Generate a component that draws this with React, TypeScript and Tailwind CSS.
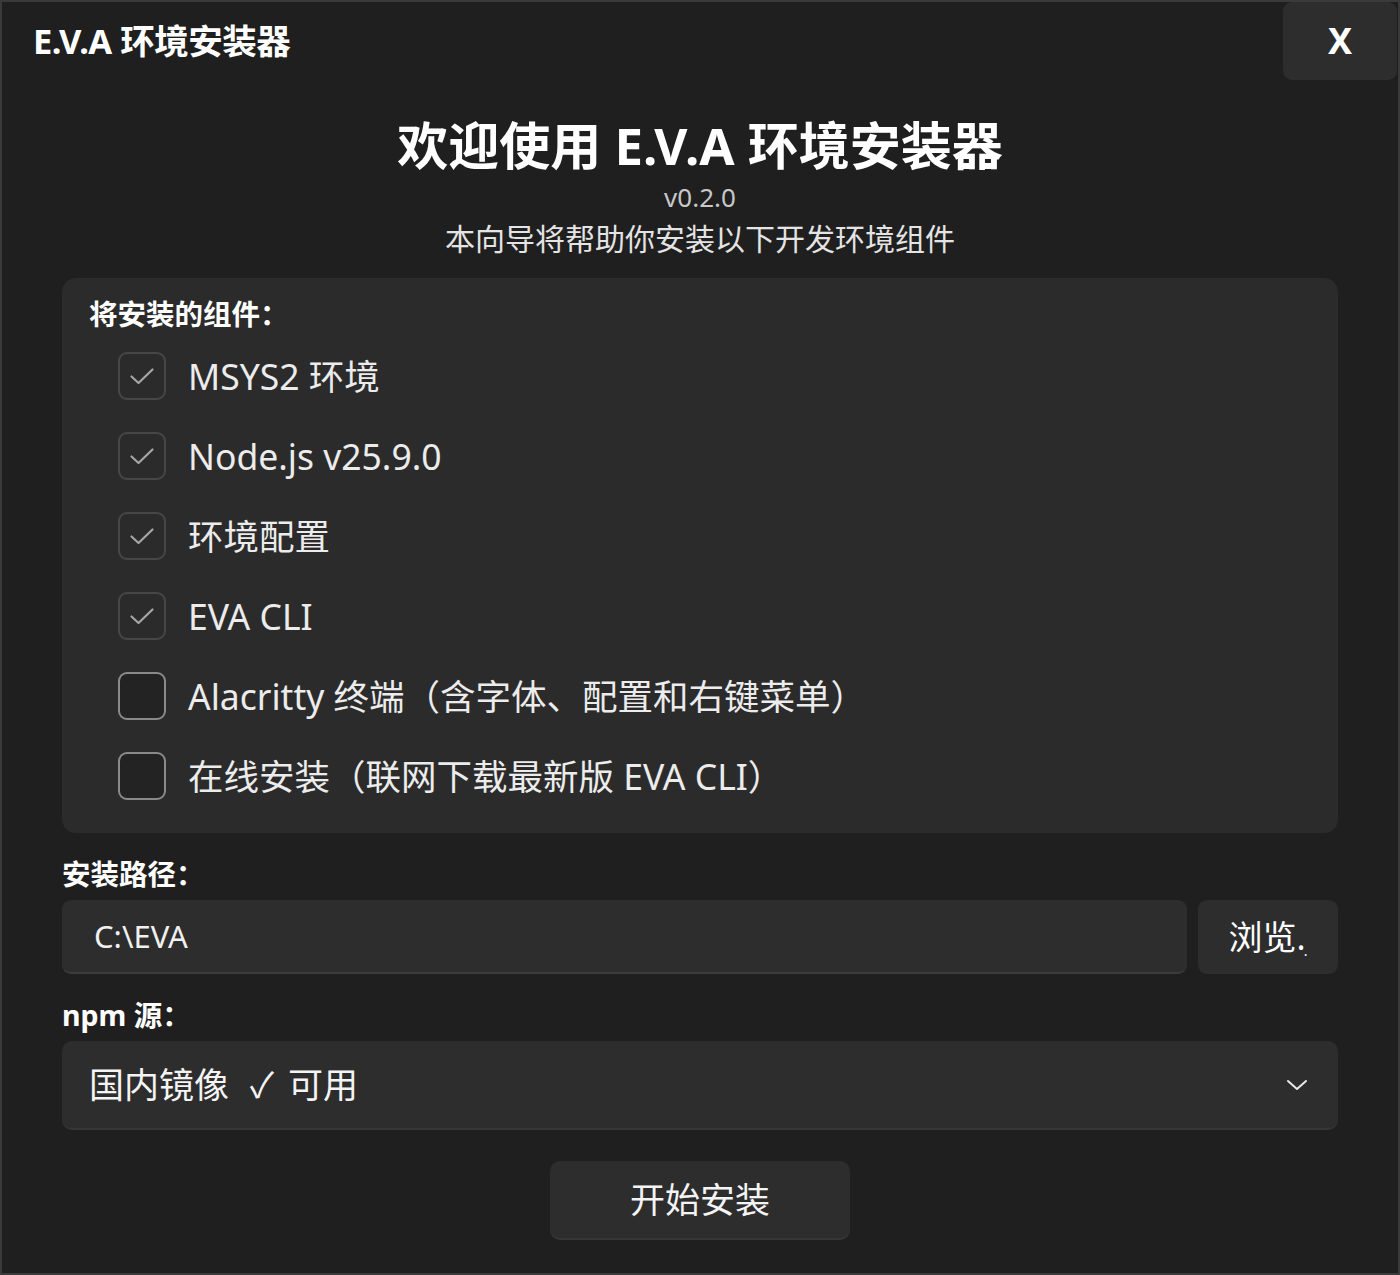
import { useState } from 'react'

const font = { fontFamily: '"Noto Sans", "Noto Sans CJK SC", sans-serif' }

interface Item {
  label: string
  checked: boolean
}

const items: Item[] = [
  { label: 'MSYS2 环境', checked: true },
  { label: 'Node.js v25.9.0', checked: true },
  { label: '环境配置', checked: true },
  { label: 'EVA CLI', checked: true },
  { label: 'Alacritty 终端（含字体、配置和右键菜单）', checked: false },
  { label: '在线安装（联网下载最新版 EVA CLI）', checked: false },
]

function CheckBox({ checked }: { checked: boolean }) {
  if (checked) {
    return (
      <div className="w-[48px] h-[48px] shrink-0 rounded-[9px] border-2 border-[#474747] bg-[#2b2b2b] flex items-center justify-center">
        <svg width="28" height="28" viewBox="0 0 28 28" fill="none">
          <polyline points="3.5,14.5 10.5,21 24.5,7.5" stroke="#a6a6a6" strokeWidth="2.2" strokeLinecap="round" strokeLinejoin="round" />
        </svg>
      </div>
    )
  }
  return <div className="w-[48px] h-[48px] shrink-0 rounded-[9px] border-2 border-[#8a8a8a] bg-[#232323]" />
}

export default function App() {
  const [path] = useState('C:\\EVA')

  return (
    <div style={font} className="w-[1400px] h-[1275px] bg-[#1f1f1f] border-2 border-[#3a3a3a] text-white overflow-hidden flex flex-col">
      <div className="h-[78px] flex items-center justify-between pl-[31px] pr-[1px]">
        <div className="text-[34.5px] leading-[40px] font-bold tracking-[-0.5px]">E.V.A 环境安装器</div>
        <button className="w-[114px] h-[78px] rounded-[9px] bg-[#2d2d2d] flex items-center justify-center text-[36px] font-bold">
          X
        </button>
      </div>

      <div className="px-[60px] flex flex-col">
        <h1 className="mt-[35px] text-center text-[51px] leading-[60px] font-bold">欢迎使用 E.V.A 环境安装器</h1>
        <div className="mt-[5px] text-center text-[26px] leading-[34px] text-[#c8c8c8]">v0.2.0</div>
        <div className="mt-[5px] text-center text-[30px] leading-[40px] text-[#e4e4e4]">本向导将帮助你安装以下开发环境组件</div>

        <div className="mt-[19px] h-[555px] rounded-[14px] bg-[#2b2b2b] pl-[27px] pt-[18px]">
          <div className="text-[28.5px] leading-[36px] font-bold">将安装的组件：</div>
          <div className="mt-[20px] ml-[29px] flex flex-col gap-[32px]">
            {items.map((item) => (
              <div key={item.label} className="h-[48px] flex items-center gap-[22px]">
                <CheckBox checked={item.checked} />
                <span className="text-[35.5px] leading-[48px] text-[#ececec]">{item.label}</span>
              </div>
            ))}
          </div>
        </div>

        <div className="mt-[23px] text-[28.5px] leading-[36px] font-bold">安装路径：</div>
        <div className="mt-[8px] flex gap-[11px]">
          <div className="flex-1 h-[74px] rounded-[9px] bg-[#2d2d2d] border-b-2 border-[#3c3c3c] flex items-center pl-[32px] text-[31px] text-[#f0f0f0]">
            {path}
          </div>
          <button className="w-[140px] h-[74px] rounded-[9px] bg-[#2d2d2d] flex items-center justify-center text-[34px] leading-[40px]">
            <span>浏览.</span>
            <span className="text-[14px] leading-[14px] self-end mb-[16px] -ml-[2px]">.</span>
          </button>
        </div>

        <div className="mt-[23px] text-[28.5px] leading-[36px] font-bold">npm 源：</div>
        <div className="mt-[8px] h-[89px] rounded-[10px] bg-[#2d2d2d] border-b-2 border-[#363636] flex items-center justify-between pl-[27px] pr-[30px]">
          <span className="text-[35px] leading-[48px] text-[#f4f4f4] flex items-center">
            <span>国内镜像</span>
            <span className="ml-[21px] mr-[14px]">✓</span>
            <span>可用</span>
          </span>
          <svg width="22" height="14" viewBox="0 0 22 14" fill="none">
            <polyline points="2,3 11,11 20,3" stroke="#e8e8e8" strokeWidth="2" strokeLinecap="round" strokeLinejoin="round" />
          </svg>
        </div>

        <div className="mt-[31px] flex justify-center">
          <button className="w-[300px] h-[79px] rounded-[10px] bg-[#2d2d2d] border-b-2 border-[#363636] text-[35px] leading-[48px] text-[#f4f4f4]">
            开始安装
          </button>
        </div>
      </div>
    </div>
  )
}
